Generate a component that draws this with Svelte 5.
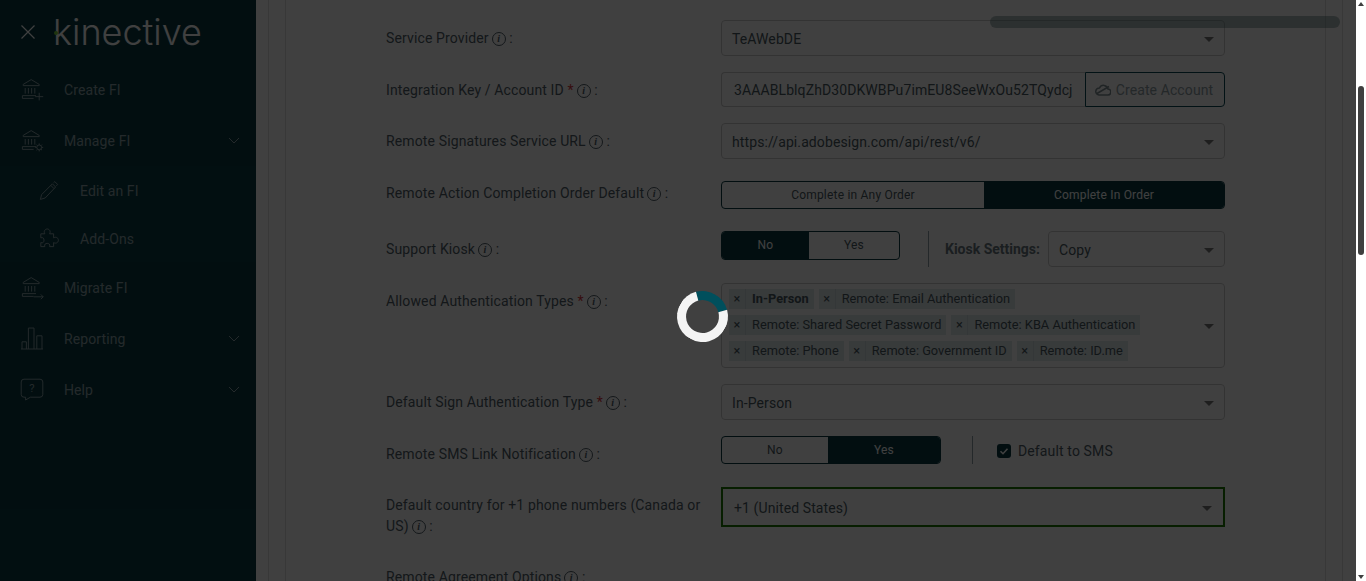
<script lang="ts">
	const nav = [
		{ label: 'Create FI', icon: 'bankPlus' },
		{ label: 'Manage FI', icon: 'bankGear', chevron: true },
		{ label: 'Edit an FI', icon: 'pencil', sub: true },
		{ label: 'Add-Ons', icon: 'puzzle', sub: true },
		{ label: 'Migrate FI', icon: 'bankArrow' },
		{ label: 'Reporting', icon: 'bars', chevron: true },
		{ label: 'Help', icon: 'help', chevron: true }
	];

	const authTypes = [
		{ label: 'In-Person', bold: true },
		{ label: 'Remote: Email Authentication' },
		{ label: 'Remote: Shared Secret Password' },
		{ label: 'Remote: KBA Authentication' },
		{ label: 'Remote: Phone' },
		{ label: 'Remote: Government ID' },
		{ label: 'Remote: ID.me' }
	];
</script>

{#snippet info()}
	<span class="info"><i>i</i></span>
{/snippet}

{#snippet caret()}
	<span class="caret"></span>
{/snippet}

{#snippet bank()}
	<path d="M4 9.500 14 3.500l10 6v1.500H4zM6.500 14v7M10.500 14v7M14.500 14v7M18.500 14v7" />
	<path d="M3 23.500h17M3 23.500v3.500h14" />
{/snippet}

<div class="shell">
	<aside class="sidebar">
		<div class="brand">
			<svg class="close" viewBox="0 0 14 14" width="14" height="14">
				<path d="M.5.5l13 13M13.500.5l-13 13" />
			</svg>
			<span class="logo">kinective<span class="dot"></span></span>
		</div>
		<nav>
			{#each nav as item}
				<div class="nav-item" class:sub={item.sub}>
					<span class="nav-icon">
						<svg viewBox="0 1.500 30 30" width="24" height="24">
							{#if item.icon === 'bankPlus'}
								{@render bank()}
								<path d="M24 20v9.500M19 24.800h10" />
							{:else if item.icon === 'bankGear'}
								{@render bank()}
								<circle cx="24" cy="24.500" r="3" />
								<path d="M24 19.500v2M24 27.500v2M19 24.500h2M27 24.500h2M20.500 21l1.400 1.400M27.500 21l-1.400 1.400M20.500 28l1.400-1.400M27.500 28l-1.400-1.400" />
							{:else if item.icon === 'pencil'}
								<path d="M7 21l-1.500 6 6-1.800L24.500 11.500 20.500 7.500zM18.500 9.500l4 4M22 6l1.500-1.200 3.500 3.500-1.500 1.700" />
							{:else if item.icon === 'puzzle'}
								<path d="M6 10h5c-2-4 1-6 3-6s5 2 3 6h5v5c4-2 6 1 6 3s-2 5-6 3v5h-5c1-3-1-4-3-4s-4 1-3 4H6v-5c3 1 4-1 4-3s-1-4-4-3z" />
							{:else if item.icon === 'bankArrow'}
								{@render bank()}
								<path d="M17 27.500h12M26 24.500l3 3-3 3" />
							{:else if item.icon === 'bars'}
								<path d="M1.200 29h27.500M2.500 29v-9h5.500v9M10.500 29V2.800h7v26.200M21 29V12.500h6.500V29" />
							{:else}
								<path d="M5 3h20q3.500 0 3.500 3.500v15.500q0 3.500-3.500 3.500H13l-6 3.500v-3.500H5q-3.500 0-3.500-3.500V6.500Q1.500 3 5 3z" />
								<text x="15" y="19.500" class="q">?</text>
							{/if}
						</svg>
					</span>
					<span class="nav-label">{item.label}</span>
					{#if item.chevron}
						<svg class="chevron" viewBox="0 0 12 7" width="12" height="7"><path d="M1 1l5 5 5-5" /></svg>
					{/if}
				</div>
			{/each}
		</nav>
	</aside>

	<main class="main">
		<div class="card">
			<div class="card-inner">
				<form class="form">
					<div class="row">
						<div class="label">Service Provider{@render info()} :</div>
						<div class="control"><div class="select">TeAWebDE{@render caret()}</div></div>
					</div>
					<div class="row">
						<div class="label">Integration Key / Account ID <em>*</em>{@render info()} :</div>
						<div class="control input-group">
							<div class="input">3AAABLblqZhD30DKWBPu7imEU8SeeWxOu52TQydcj</div>
							<button type="button" class="create">
								<svg viewBox="0 0 16 12" width="16" height="12">
									<path d="M4 11h8.500a3 3 0 0 0 .5-6A4.500 4.500 0 0 0 4.500 4 3.500 3.500 0 0 0 4 11zM2 9.500 14 2.500" />
								</svg>
								Create Account
							</button>
						</div>
					</div>
					<div class="row">
						<div class="label">Remote Signatures Service URL{@render info()} :</div>
						<div class="control"><div class="select">https://api.adobesign.com/api/rest/v6/{@render caret()}</div></div>
					</div>
					<div class="row row-toggle">
						<div class="label">Remote Action Completion Order Default{@render info()} :</div>
						<div class="control control-pad">
							<div class="toggle full">
								<span>Complete in Any Order</span>
								<span class="on">Complete In Order</span>
							</div>
						</div>
					</div>
					<div class="row">
						<div class="label">Support Kiosk{@render info()} :</div>
						<div class="control inline">
							<div class="toggle kiosk">
								<span class="on">No</span>
								<span>Yes</span>
							</div>
							<span class="divider kiosk-divider"></span>
							<span class="kiosk-label">Kiosk Settings:</span>
							<div class="select kiosk-select">Copy{@render caret()}</div>
						</div>
					</div>
					<div class="row">
						<div class="label">Allowed Authentication Types <em>*</em>{@render info()} :</div>
						<div class="control">
							<div class="multi">
								<div class="chips">
									{#each authTypes as type}
										<span class="chip">
											<span class="chip-x">×</span>
											<span class="chip-label" class:bold={type.bold}>{type.label}</span>
										</span>
									{/each}
								</div>
								{@render caret()}
							</div>
						</div>
					</div>
					<div class="row">
						<div class="label">Default Sign Authentication Type <em>*</em>{@render info()} :</div>
						<div class="control"><div class="select">In-Person{@render caret()}</div></div>
					</div>
					<div class="row">
						<div class="label">Remote SMS Link Notification{@render info()} :</div>
						<div class="control inline">
							<div class="toggle sms">
								<span>No</span>
								<span class="on">Yes</span>
							</div>
							<span class="divider sms-divider"></span>
							<span class="check">
								<svg viewBox="0 0 14 14" width="14" height="14"><path d="M3.500 7.200 6 9.700l4.500-5" /></svg>
							</span>
							<span class="check-label">Default to SMS</span>
						</div>
					</div>
					<div class="row">
						<div class="label">Default country for +1 phone numbers (Canada or US){@render info()} :</div>
						<div class="control"><div class="select focused">+1 (United States){@render caret()}</div></div>
					</div>
					<div class="row">
						<div class="label">Remote Agreement Options{@render info()} :</div>
					</div>
				</form>
			</div>
		</div>
	</main>

	<div class="scrollbar">
		<span class="arrow up"></span>
		<span class="thumb"></span>
		<span class="arrow down"></span>
	</div>

	<div class="overlay">
		<div class="progress"></div>
		<div class="spinner"></div>
	</div>
</div>

<style>
	:global(body) {
		margin: 0;
		font-family: Roboto, 'Liberation Sans', sans-serif;
	}

	.shell {
		position: relative;
		display: flex;
		width: 1366px;
		height: 581px;
		overflow: hidden;
		background: #fff;
		font-size: 14px;
		color: #4f5e68;
	}

	.sidebar {
		flex: 0 0 256px;
		background: #083a42;
		color: #8fa5aa;
	}

	.brand {
		display: flex;
		align-items: center;
		height: 64px;
		padding-left: 21px;
	}

	.close {
		flex: none;
		fill: none;
		stroke: #fff;
		stroke-width: 1.2;
	}

	.logo {
		position: relative;
		margin-left: 18px;
		font-family: Inter, sans-serif;
		font-size: 36px;
		font-weight: 300;
		line-height: 44px;
		color: #fff;
	}

	.dot {
		position: absolute;
		left: 1px;
		top: 21px;
		width: 4px;
		height: 4px;
		border-radius: 50%;
		background: #7cd23c;
	}

	nav {
		display: flex;
		flex-direction: column;
	}

	.nav-item {
		display: flex;
		align-items: center;
		height: 51px;
		padding-left: 20px;
		padding-right: 16px;
		letter-spacing: 0.1px;
	}

	.nav-item.sub {
		box-sizing: border-box;
		height: 48px;
		padding-top: 1px;
		padding-left: 36px;
		background: #0a3e46;
	}

	.nav-icon {
		display: flex;
		flex: 0 0 44px;
	}

	.nav-icon svg {
		fill: none;
		stroke: #8fa5aa;
		stroke-width: 1.200;
	}

	.q {
		font-size: 14px;
		text-anchor: middle;
		fill: #8fa5aa;
		stroke: none;
	}

	.nav-label {
		flex: 1;
	}

	.chevron {
		fill: none;
		stroke: #8fa5aa;
		stroke-width: 1;
	}

	.main {
		flex: 1;
		min-width: 0;
		padding: 0 13px 0 12px;
	}

	.card {
		height: 100%;
		padding: 0 16px;
		border: solid #e0e0e0;
		border-width: 0 1px;
	}

	.card-inner {
		height: 100%;
		padding: 20px 0 0 100px;
		border: solid #e0e0e0;
		border-width: 0 1px;
	}

	.row {
		display: flex;
		margin-bottom: 16px;
	}

	.row-toggle {
		min-height: 40px;
	}

	.label {
		flex: 0 0 325px;
		box-sizing: border-box;
		margin-right: 10px;
		padding: 8px 0 6px;
		line-height: 21px;
		letter-spacing: 0.13px;
	}

	.label em {
		font-style: normal;
		color: #d9363e;
	}

	.info {
		display: inline-flex;
		align-items: center;
		justify-content: center;
		box-sizing: border-box;
		width: 14px;
		height: 14px;
		margin-left: 3px;
		border: 1px solid currentColor;
		border-radius: 50%;
		vertical-align: 1px;
		font-family: 'Liberation Serif', serif;
		font-size: 10px;
		font-weight: 700;
		line-height: 1;
	}

	.control {
		flex: 0 0 504px;
		min-width: 0;
	}

	.control-pad {
		padding-top: 6px;
	}

	.select {
		position: relative;
		box-sizing: border-box;
		height: 36px;
		padding: 0 10px;
		border: 1px solid #ccc;
		border-radius: 4px;
		line-height: 36px;
		letter-spacing: 0.1px;
		color: #4a5a62;
	}

	.select.focused {
		height: 40px;
		padding-left: 11px;
		border: 2px solid #1f7a00;
		border-radius: 0;
		line-height: 38px;
	}

	.caret {
		position: absolute;
		right: 10px;
		top: 50%;
		margin-top: -1px;
		border: 5px solid transparent;
		border-top-color: #777;
		border-bottom: 0;
	}

	.select.focused .caret {
		right: 11px;
	}

	.multi .caret {
		margin-top: -2px;
	}

	.input-group {
		display: flex;
		height: 35px;
	}

	.input {
		flex: 1;
		padding: 0 12px;
		border: 1px solid #ccc;
		border-right: 0;
		border-radius: 4px 0 0 4px;
		line-height: 34px;
		letter-spacing: 0.1px;
		white-space: nowrap;
		overflow: hidden;
		color: #4a5a62;
	}

	.create {
		display: flex;
		flex: 0 0 140px;
		align-items: center;
		justify-content: center;
		gap: 5px;
		padding: 0 2px 0 0;
		border: 1px solid #0b4a55;
		border-radius: 0 4px 4px 0;
		background: none;
		font: inherit;
		letter-spacing: 0.1px;
		color: #8f9ea5;
	}

	.create svg {
		fill: none;
		stroke: #7f8e95;
		stroke-width: 1.5;
	}

	.toggle {
		display: flex;
		box-sizing: border-box;
		height: 28px;
		border: 1px solid #083a42;
		border-radius: 4px;
		overflow: hidden;
		font-size: 12px;
		letter-spacing: 0.2px;
		line-height: 26px;
		color: #4a5a62;
	}

	.toggle span {
		flex: 1;
		text-align: center;
	}

	.toggle .on {
		background: #083a42;
		color: #fff;
	}

	.toggle.full span:first-child {
		flex: 0 0 262px;
	}

	.toggle.kiosk {
		flex: 0 0 179px;
		height: 29px;
	}

	.toggle.kiosk span:first-child {
		flex: 0 0 87px;
	}

	.toggle.sms {
		flex: 0 0 220px;
	}

	.toggle.sms span:first-child {
		flex: 0 0 106px;
	}

	.inline {
		display: flex;
		align-items: flex-start;
	}

	.divider {
		flex: none;
		width: 1px;
		background: #8fa0a8;
	}

	.kiosk-divider {
		height: 36px;
		margin: 0 16px 0 28px;
	}

	.sms-divider {
		height: 28px;
		margin: 0 24px 0 31px;
	}

	.kiosk-label {
		flex: none;
		width: 103px;
		font-weight: 700;
		line-height: 36px;
		color: #6a7880;
	}

	.kiosk-select {
		flex: 1;
		padding-left: 10px;
	}

	.check {
		display: flex;
		margin-top: 8px;
		flex: none;
		width: 14px;
		height: 14px;
		border-radius: 3px;
		background: #083a42;
	}

	.check svg {
		fill: none;
		stroke: #fff;
		stroke-width: 1.6;
	}

	.check-label {
		margin-left: 7px;
		line-height: 30px;
		letter-spacing: 0.13px;
	}

	.multi {
		position: relative;
		box-sizing: border-box;
		height: 85px;
		padding: 5px 40px 0 7px;
		border: 1px solid #ccc;
		border-radius: 4px;
	}

	.chips {
		display: flex;
		flex-wrap: wrap;
		gap: 6px 5px;
	}

	.chip {
		display: flex;
		height: 20px;
		background: #dfe9eb;
		font-size: 12.800px;
		line-height: 20px;
		color: #4a5a62;
	}

	.chip-x {
		width: 16px;
		border-right: 1px solid #d0dcdf;
		text-align: center;
	}

	.chip-label {
		padding: 0 5px 0 6px;
	}

	.chip-label.bold {
		font-weight: 700;
	}

	.scrollbar {
		position: relative;
		z-index: 3;
		display: flex;
		flex: 0 0 10px;
		flex-direction: column;
		align-items: center;
		background: #fff;
	}

	.thumb {
		position: absolute;
		top: 86px;
		left: 2px;
		width: 6px;
		height: 169px;
		border-radius: 3px;
		background: #3f3f3f;
	}

	.arrow {
		position: absolute;
		left: 2px;
		border: 3px solid transparent;
	}

	.arrow.up {
		top: 2px;
		border-bottom: 4px solid #3f3f3f;
		border-top: 0;
	}

	.arrow.down {
		bottom: 2px;
		border-top: 4px solid #3f3f3f;
		border-bottom: 0;
	}

	.overlay {
		position: absolute;
		inset: 0 10px 0 0;
		z-index: 2;
		background: rgba(0, 0, 0, 0.75);
	}

	.progress {
		position: absolute;
		left: 990px;
		top: 16px;
		width: 350px;
		height: 12px;
		border-radius: 6px;
		background: rgba(10, 20, 20, 0.35);
	}

	.spinner {
		position: absolute;
		left: 677px;
		top: 291px;
		box-sizing: border-box;
		width: 51px;
		height: 51px;
		border: 9px solid #f4f4f4;
		border-top-color: #004f5c;
		border-radius: 50%;
		transform: rotate(30deg);
	}
</style>
